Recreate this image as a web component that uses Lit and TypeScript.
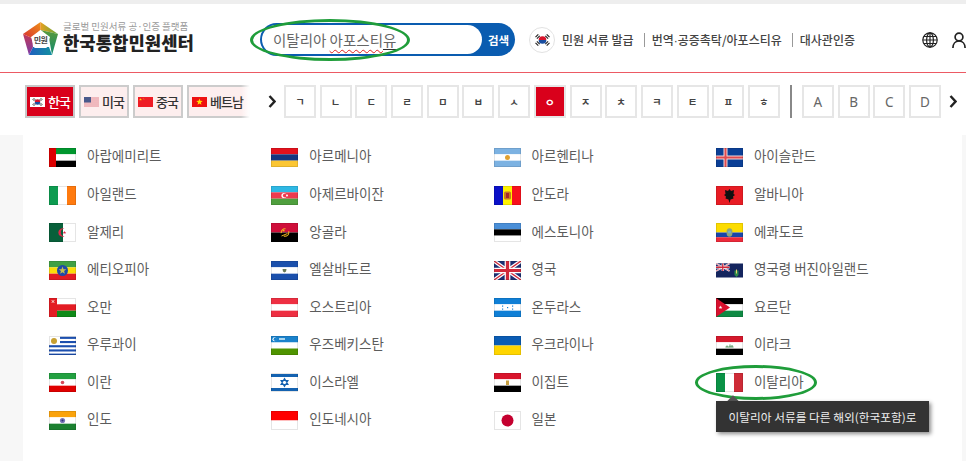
import { LitElement, html, css, svg } from "lit";
import { customElement } from "lit/decorators.js";

const hs = (colors: string[], y = 0, h = 19, x = 0, w = 27) =>
  colors.map((c, i) => svg`<rect x=${x} y=${y + (i * h) / colors.length} width=${w} height=${h / colors.length} fill=${c}></rect>`);
const vs = (colors: string[]) =>
  colors.map((c, i) => svg`<rect x=${(i * 27) / colors.length} y="0" width=${27 / colors.length} height="19" fill=${c}></rect>`);
const edge = svg`<rect x=".5" y=".5" width="26" height="18" fill="none" stroke="#000" stroke-opacity=".1"></rect>`;

const star = (cx: number, cy: number, r: number, fill: string) => {
  const pts: string[] = [];
  for (let i = 0; i < 10; i++) {
    const rad = i % 2 ? r * 0.42 : r;
    const a = (Math.PI * i) / 5 - Math.PI / 2;
    pts.push(`${(cx + rad * Math.cos(a)).toFixed(2)},${(cy + rad * Math.sin(a)).toFixed(2)}`);
  }
  return svg`<polygon points=${pts.join(" ")} fill=${fill}></polygon>`;
};

const union = (w: number, h: number) => svg`
  <rect width=${w} height=${h} fill="#1b2f73"></rect>
  <path d="M0 0L${w} ${h}M${w} 0L0 ${h}" stroke="#fff" stroke-width=${h * 0.2}></path>
  <path d="M0 0L${w} ${h}M${w} 0L0 ${h}" stroke="#d0293b" stroke-width=${h * 0.07}></path>
  <path d="M${w / 2} 0V${h}M0 ${h / 2}H${w}" stroke="#fff" stroke-width=${h * 0.3}></path>
  <path d="M${w / 2} 0V${h}M0 ${h / 2}H${w}" stroke="#d0293b" stroke-width=${h * 0.17}></path>`;

const FLAGS: Record<string, () => unknown> = {
  ae: () => svg`${hs(["#00972e", "#fff", "#000"])}<rect width="7" height="19" fill="#dc0000"></rect>`,
  am: () => hs(["#e3111c", "#14367f", "#fbc633"]),
  ar: () => svg`${hs(["#7cb2e2", "#fff", "#7cb2e2"])}<circle cx="13.5" cy="9.5" r="2.5" fill="#e0a030"></circle>`,
  is: () => svg`<rect width="27" height="19" fill="#0b3f96"></rect><path d="M9.5 0V19M0 9.5H27" stroke="#f4d8d8" stroke-width="4"></path><path d="M9.5 0V19M0 9.5H27" stroke="#e04a50" stroke-width="2"></path>`,
  ie: () => vs(["#0d9b50", "#fff", "#ff7a0f"]),
  az: () => svg`${hs(["#2eb8e4", "#ee3a4e", "#4f9f3e"])}<circle cx="13" cy="9.5" r="2.6" fill="#fff"></circle><circle cx="14" cy="9.5" r="2.1" fill="#ee3a4e"></circle><circle cx="16" cy="9.5" r="1" fill="#fff"></circle>`,
  ad: () => svg`${vs(["#0a10c8", "#fef200", "#f8101c"])}<rect x="10" y="5.5" width="7" height="8" rx="1.5" fill="#c87820"></rect><rect x="12" y="7" width="3" height="5" fill="#a6282a"></rect>`,
  al: () => svg`<rect width="27" height="19" fill="#e81c24"></rect><path d="M13.5 3l1.5 2 3-1-.5 4 1.500 1-2 1.500 .5 2-3 1-1 3.500-1-3.500-3-1 .5-2-2-1.500 1.500-1-.5-4 3 1z" fill="#111"></path>`,
  dz: () => svg`<rect width="27" height="19" fill="#fff"></rect><rect width="14" height="19" fill="#08603a"></rect><path d="M15.500 5.800A4.200 4.200 0 1 0 15.500 13.200A3.400 3.400 0 1 1 15.500 5.800z" fill="#e0284a"></path>${star(15.5, 9.5, 1.8, "#e0284a")}`,
  ao: () => svg`${hs(["#cf0e3a", "#000"])}<circle cx="14" cy="9.500" r="3.800" fill="none" stroke="#f2b71e" stroke-width="1.100" stroke-dasharray="7 4"></circle>${star(12.5, 7.5, 1.6, "#f2b71e")}<path d="M10.500 13l6-2.500" stroke="#f2b71e" stroke-width="1"></path>`,
  ee: () => hs(["#4a8fd8", "#000", "#fff"]),
  ec: () => svg`<rect width="27" height="9.500" fill="#fcdc00"></rect><rect y="9.500" width="27" height="4.750" fill="#1946a8"></rect><rect y="14.250" width="27" height="4.750" fill="#ee2a3a"></rect><ellipse cx="13.500" cy="9.500" rx="3" ry="4.200" fill="#8fa67a"></ellipse><circle cx="13.500" cy="9" r="1.600" fill="#78b0c8"></circle>`,
  et: () => svg`${hs(["#41a044", "#fcdd09", "#e31b23"])}<circle cx="13.500" cy="9.500" r="5.500" fill="#1f4aa8"></circle>${star(13.5, 9.5, 4, "#c8c050")}`,
  sv: () => svg`${hs(["#1b50ac", "#fff", "#1b50ac"])}<path d="M11.500 8h4l-.5 2.500-1.500 1-1.500-1z" fill="#6a7a58"></path>`,
  gb: () => union(27, 19),
  vg: () => svg`<g transform="translate(0 2.500)"><rect width="27" height="14" fill="#14255e"></rect>${union(13.500, 7.500)}<path d="M18.500 7h4v4.500l-2 2-2-2z" fill="#2e8a4a"></path><rect x="20" y="6" width="1" height="4" fill="#e8d070"></rect></g>`,
  om: () => svg`<rect width="27" height="6.300" fill="#fff"></rect><rect y="6.300" width="27" height="6.400" fill="#e31c23"></rect><rect y="12.700" width="27" height="6.300" fill="#0f8a18"></rect><rect width="8" height="19" fill="#e31c23"></rect><path d="M2.500 5l3-3M5.500 5l-3-3" stroke="#f4c0b8" stroke-width=".8"></path><circle cx="4" cy="3.500" r=".9" fill="#f4c0b8"></circle>`,
  at: () => hs(["#ee2f42", "#fff", "#ee2f42"]),
  hn: () => svg`${hs(["#0f7fd6", "#fff", "#0f7fd6"])}<g fill="#0f7fd6"><rect x="8" y="7.500" width="1.200" height="1.200"></rect><rect x="8" y="10.500" width="1.200" height="1.200"></rect><rect x="13" y="9" width="1.200" height="1.200"></rect><rect x="18" y="7.500" width="1.200" height="1.200"></rect><rect x="18" y="10.500" width="1.200" height="1.200"></rect></g>`,
  jo: () => svg`${hs(["#000", "#fff", "#0f8a44"])}<polygon points="0,0 14,9.500 0,19" fill="#d8112e"></polygon>${star(4.5, 9.5, 2, "#fff")}`,
  uy: () => svg`<rect width="27" height="19" fill="#fff"></rect>${[0, 2, 4, 6, 8].map((i) => svg`<rect x=${i < 4 ? 11 : 0} y=${i * 2.100 + 0.800} width=${i < 4 ? 16 : 27} height="2.100" fill="#1c4fae"></rect>`)}<circle cx="5" cy="5" r="3" fill="#c8a030"></circle>`,
  uz: () => svg`<rect width="27" height="6.500" fill="#1a82cc"></rect><rect y="6.500" width="27" height="6.500" fill="#fff"></rect><rect y="12.500" width="27" height="6.500" fill="#4f9400"></rect><circle cx="3.500" cy="3.200" r="2" fill="#fff"></circle><circle cx="4.300" cy="3.200" r="1.700" fill="#1a82cc"></circle><rect x="8" y="2" width="6" height="2" fill="#a8d4ee"></rect>`,
  ua: () => hs(["#0a5cb4", "#ffd500"]),
  iq: () => svg`${hs(["#d5182c", "#fff", "#000"])}<path d="M9.500 11h8M11 9.500v1.500M14 8.500v2.500M16 9v2" stroke="#2c7a3c" stroke-width=".8"></path>`,
  ir: () => svg`${hs(["#22a040", "#fff", "#e00000"])}<circle cx="13.500" cy="9.500" r="1.800" fill="#d84858"></circle>`,
  il: () => svg`<rect width="27" height="19" fill="#fff"></rect><rect y="1" width="27" height="3" fill="#1462b0"></rect><rect y="15" width="27" height="3" fill="#1462b0"></rect><path d="M13.500 5.500l3.500 6h-7zM13.500 13.500l-3.500-6h7z" fill="none" stroke="#1462b0" stroke-width="1.100"></path>`,
  eg: () => svg`${hs(["#d8142c", "#fff", "#000"])}<rect x="12" y="7.500" width="3" height="4.500" fill="#c8a040"></rect>`,
  it: () => vs(["#0a9246", "#fff", "#ce2b37"]),
  in: () => svg`${hs(["#faa30c", "#fff", "#1b8030"])}<circle cx="13.500" cy="9.500" r="2.600" fill="#7a78b8"></circle><circle cx="13.500" cy="9.500" r="1" fill="#30307a"></circle>`,
  id: () => hs(["#ff0000", "#fff"]),
  jp: () => svg`<rect width="27" height="19" fill="#fff"></rect><circle cx="13.500" cy="9.500" r="6" fill="#c4002f"></circle>${edge}`,
};

const COUNTRIES: [string, string][] = [
  ["ae", "아랍에미리트"], ["am", "아르메니아"], ["ar", "아르헨티나"], ["is", "아이슬란드"],
  ["ie", "아일랜드"], ["az", "아제르바이잔"], ["ad", "안도라"], ["al", "알바니아"],
  ["dz", "알제리"], ["ao", "앙골라"], ["ee", "에스토니아"], ["ec", "에콰도르"],
  ["et", "에티오피아"], ["sv", "엘살바도르"], ["gb", "영국"], ["vg", "영국령 버진아일랜드"],
  ["om", "오만"], ["at", "오스트리아"], ["hn", "온두라스"], ["jo", "요르단"],
  ["uy", "우루과이"], ["uz", "우즈베키스탄"], ["ua", "우크라이나"], ["iq", "이라크"],
  ["ir", "이란"], ["il", "이스라엘"], ["eg", "이집트"], ["it", "이탈리아"],
  ["in", "인도"], ["id", "인도네시아"], ["jp", "일본"],
];

const JAMO = ["ㄱ", "ㄴ", "ㄷ", "ㄹ", "ㅁ", "ㅂ", "ㅅ", "ㅇ", "ㅈ", "ㅊ", "ㅋ", "ㅌ", "ㅍ", "ㅎ"];

const taegeuk = (size: number, bg = "#fff") => html`<svg width=${size} height=${(size * 2) / 3} viewBox="0 0 30 20">
  <rect width="30" height="20" fill=${bg}></rect>
  <g stroke="#222" stroke-width="1.600">
    <path d="M5 6l4-4M7 8l4-4M19 4l4 4M21 2l4 4M5 14l4 4M7 12l4 4M19 16l4-4M21 18l4-4"></path>
  </g>
  <path d="M9.500 10a5.500 5.500 0 0 1 11 0z" fill="#d8142c"></path>
  <path d="M9.500 10a5.500 5.500 0 0 0 11 0z" fill="#1a4ea0"></path>
</svg>`;

const usFlag = html`<svg width="15" height="10" viewBox="0 0 15 10">
  <rect width="15" height="10" fill="#fff"></rect>
  <path d="M0 1h15M0 3h15M0 5h15M0 7h15M0 9h15" stroke="#e0727c" stroke-width="1"></path>
  <rect width="7" height="5.500" fill="#4a5a8c"></rect>
</svg>`;
const cnFlag = html`<svg width="15" height="10" viewBox="0 0 15 10">
  <rect width="15" height="10" fill="#ee1c25"></rect>
  ${star(2.5, 2.5, 1.4, "#ffde00")}${star(5.2, 1.2, 0.5, "#ffde00")}${star(6, 2.6, 0.5, "#ffde00")}
</svg>`;
const vnFlag = html`<svg width="15" height="10" viewBox="0 0 15 10">
  <rect width="15" height="10" fill="#ee1010"></rect>
  ${star(7.5, 5, 3.4, "#ffde00")}
</svg>`;

@customElement("app-root")
export class AppRoot extends LitElement {
  static styles = css`
    :host {
      display: block;
      position: relative;
      width: 966px;
      height: 461px;
      overflow: hidden;
      background: #fff;
      font-family: "Noto Sans CJK KR", "Noto Sans", sans-serif;
      color: #555;
    }
    .top-strip { height: 4px; background: #eee; }
    .header {
      height: 68px;
      display: flex;
      align-items: center;
      border-bottom: 1px solid #ec5a64;
      box-sizing: content-box;
      padding-left: 23px;
    }
    .header > * { flex: none; }
    .logo { display: flex; align-items: center; gap: 5px; width: 237px; margin-top: 1px; }
    .logo-mark { display: block; }
    .logo-text { display: flex; flex-direction: column; margin-bottom: 5px; }
    .logo-sub { font-size: 9.500px; line-height: 12px; color: #999; white-space: nowrap; }
    .logo-title { font-size: 17.800px; line-height: 21px; font-weight: 900; color: #222; white-space: nowrap; }
    .search {
      width: 255px;
      height: 33px;
      margin-top: 3px;
      box-sizing: border-box;
      display: flex;
      background: #0a5cb0;
      border-radius: 17px;
      padding: 2px 0 2px 2px;
    }
    .search-box {
      width: 220px;
      flex: none;
      background: #fff;
      border-radius: 15px;
      display: flex;
      align-items: center;
      padding-left: 11px;
      box-sizing: border-box;
      font-size: 14.500px;
      color: #666;
      white-space: pre;
    }
    .typo { text-decoration: underline wavy #e02020 1px; text-underline-offset: 3px; }
    .cursor { text-decoration: underline #333 1px; text-underline-offset: 3px; }
    .search-btn { flex: 1; display: flex; align-items: center; justify-content: center; color: #fff; font-size: 11.500px; font-weight: 700; white-space: nowrap; }
    .links { display: flex; align-items: center; margin-left: 14px; margin-top: 3px; font-size: 12px; font-weight: 500; color: #444; white-space: nowrap; }
    .dot { font-family: "Liberation Sans", sans-serif; }
    .kr-circle {
      width: 26px; height: 26px; box-sizing: border-box; border-radius: 50%; border: 1px solid #e2e2e2;
      display: flex; align-items: center; justify-content: center; margin-right: 7px; overflow: hidden;
    }
    .sep { width: 1px; height: 14px; background: #999; margin: 0 7px 0 10px; }
    .icons { display: flex; align-items: center; gap: 14px; margin-left: 67px; margin-top: 3px; }
    .icons svg { display: block; }

    .nav { height: 62px; box-sizing: border-box; padding: 12px 0 0 25px; display: flex; align-items: flex-start; }
    .countries { position: relative; display: flex; gap: 4px; width: 227px; flex: none; }
    .countries::after {
      content: ""; position: absolute; right: 0; top: 0; bottom: 0; width: 11px;
      background: linear-gradient(to right, rgba(255,255,255,0), #fff 80%);
    }
    .cbtn {
      height: 33px; box-sizing: border-box; border: 2px solid #ccc; background: #fdeeee;
      display: flex; align-items: center; justify-content: flex-start; gap: 3px;
      font-size: 13px; letter-spacing: -1px; color: #333; padding: 0 3px; font-weight: 500; white-space: nowrap;
    }
    .cbtn svg { flex: none; }
    .cbtn.w { width: 50px; }
    .cbtn.wide { width: 64px; }
    .cbtn.on { background: #d9001b; color: #fff; border-color: #c8c8c8; }
    .chev { height: 33px; display: flex; align-items: center; justify-content: center; flex: none; box-sizing: border-box; }
    .chev.a { width: 32px; justify-content: flex-end; padding-right: 8px; }
    .chev.b { width: 16px; margin-left: 4px; }
    .boxes { display: flex; gap: 3.700px; flex: none; }
    .box {
      width: 32px; height: 33px; box-sizing: border-box; border: 2px solid #e6e6e6; background: #fff;
      display: flex; align-items: center; justify-content: center; font-size: 10px; font-weight: 700; color: #444;
    }
    .box.on { background: #d9001b; border-color: #e6e6e6; color: #fff; font-weight: 700; font-size: 11px; }
    .box.latin { font-family: "Noto Sans", sans-serif; font-size: 13.500px; font-weight: 400; color: #666; }
    .vrule { width: 2px; height: 33px; background: #888; margin: 0 10px; flex: none; }

    .page { height: 326px; background: #f7f7f7; padding: 0 4px 0 23px; }
    .panel {
      height: 100%; background: #fff; box-sizing: border-box; padding: 1.700px 0 0 26px;
      display: grid; grid-template-columns: repeat(4, 222.300px); grid-auto-rows: 37.570px;
    }
    .row { display: flex; align-items: center; gap: 11px; font-size: 13.500px; color: #5c5c5c; white-space: nowrap; }
    .flag { display: block; margin-top: 4px; flex: none; }

    .ring {
      position: absolute; box-sizing: border-box; border: 3px solid #1f9d3a; border-radius: 50%; pointer-events: none;
    }
    .ring.one { left: 250px; top: 19px; width: 160px; height: 42px; }
    .ring.two { left: 695px; top: 365px; width: 122px; height: 35px; }
    .tip {
      position: absolute; left: 716px; top: 401px; width: 213px; height: 31px;
      background: #333; color: #eee; font-size: 11.700px; display: flex; align-items: center; justify-content: center;
      box-shadow: 2px 2px 4px rgba(0,0,0,.45); white-space: nowrap;
    }
    .arrow {
      position: absolute; left: 729px; top: 397px; width: 8px; height: 8px; background: #555; transform: rotate(45deg);
    }
  `;

  render() {
    return html`
      <div class="top-strip"></div>
      <header class="header">
        <div class="logo">
          <svg class="logo-mark" width="35" height="34" viewBox="0 0 35 34">
            <defs>
              <linearGradient id="g1" x1="0" y1="0" x2="1" y2="0"><stop offset="0" stop-color="#e8a020"></stop><stop offset="1" stop-color="#5fa83a"></stop></linearGradient>
              <linearGradient id="g2" x1="0" y1="0" x2="0" y2="1"><stop offset="0" stop-color="#5a9a3a"></stop><stop offset="1" stop-color="#0f8a70"></stop></linearGradient>
              <linearGradient id="g3" x1="1" y1="0" x2="0" y2="0"><stop offset="0" stop-color="#1290a0"></stop><stop offset="1" stop-color="#1f5fc0"></stop></linearGradient>
              <linearGradient id="g4" x1="0" y1="1" x2="0" y2="0"><stop offset="0" stop-color="#7a3ca8"></stop><stop offset="1" stop-color="#c03a58"></stop></linearGradient>
              <linearGradient id="g5" x1="0" y1="1" x2="1" y2="0"><stop offset="0" stop-color="#d83030"></stop><stop offset="1" stop-color="#ee9018"></stop></linearGradient>
            </defs>
            <polygon points="17.500,0 35,12 17.500,8" fill="url(#g1)"></polygon>
            <polygon points="35,12 29,33 26,16 17.500,8" fill="url(#g2)"></polygon>
            <polygon points="29,33 6,33 10,25 26,25" fill="url(#g3)"></polygon>
            <polygon points="6,33 0,12 9,16 10,25" fill="url(#g4)"></polygon>
            <polygon points="0,12 17.500,0 17.500,8 9,16" fill="url(#g5)"></polygon>
            <polygon points="17.500,8 27,15 23.500,26 11.500,26 8,15" fill="#fff"></polygon>
            <text x="17.500" y="20.500" text-anchor="middle" font-size="8" font-weight="700" fill="#444" letter-spacing="-.5">민원</text>
          </svg>
          <div class="logo-text">
            <span class="logo-sub">글로벌 민원서류 공·인증 플랫폼</span>
            <span class="logo-title">한국통합민원센터</span>
          </div>
        </div>
        <div class="search">
          <div class="search-box">이탈리아 <span class="typo">아포스티</span><span class="cursor">유</span></div>
          <div class="search-btn">검색</div>
        </div>
        <nav class="links">
          <span class="kr-circle">${taegeuk(21)}</span>
          <span>민원 서류 발급</span><span class="sep"></span>
          <span>번역<span class="dot">·</span>공증촉탁/아포스티유</span><span class="sep"></span>
          <span>대사관인증</span>
        </nav>
        <div class="icons">
          <svg width="16" height="16" viewBox="0 0 16 16" fill="none" stroke="#222" stroke-width="1.200">
            <circle cx="8" cy="8" r="7.200"></circle>
            <ellipse cx="8" cy="8" rx="3.400" ry="7.200"></ellipse>
            <path d="M8 .8V15.200M.8 8H15.200M1.800 4.500H14.200M1.800 11.500H14.200"></path>
          </svg>
          <svg width="14" height="16" viewBox="0 0 14 16" fill="none" stroke="#222" stroke-width="1.700">
            <circle cx="7" cy="5" r="3.900"></circle>
            <path d="M.9 16c0-4 2.500-7 6.100-7s6.100 3 6.100 7"></path>
          </svg>
        </div>
      </header>
      <div class="nav">
        <div class="countries">
          <div class="cbtn w on">${taegeuk(15)}<span>한국</span></div>
          <div class="cbtn w">${usFlag}<span>미국</span></div>
          <div class="cbtn w">${cnFlag}<span>중국</span></div>
          <div class="cbtn wide">${vnFlag}<span>베트남</span></div>
        </div>
        <div class="chev a">${this.chevron()}</div>
        <div class="boxes">
          ${JAMO.map((j) => html`<div class="box ${j === "ㅇ" ? "on" : ""}">${j}</div>`)}
        </div>
        <div class="vrule"></div>
        <div class="boxes">
          ${["A", "B", "C", "D"].map((l) => html`<div class="box latin">${l}</div>`)}
        </div>
        <div class="chev b">${this.chevron()}</div>
      </div>
      <div class="page">
        <main class="panel">
          ${COUNTRIES.map(
            ([code, name]) => html`<div class="row">
              <svg class="flag" width="27" height="19" viewBox="0 0 27 19">${FLAGS[code]()}${code !== "jp" && code !== "vg" ? edge : ""}</svg>
              <span>${name}</span>
            </div>`
          )}
        </main>
      </div>
      <div class="ring one"></div>
      <div class="ring two"></div>
      <div class="arrow"></div>
      <div class="tip">이탈리아 서류를 다른 해외(한국포함)로</div>
    `;
  }

  chevron() {
    return html`<svg width="8" height="13" viewBox="0 0 8 13"><path d="M1.500 1l5 5.500-5 5.500" fill="none" stroke="#222" stroke-width="2.400"></path></svg>`;
  }
}
